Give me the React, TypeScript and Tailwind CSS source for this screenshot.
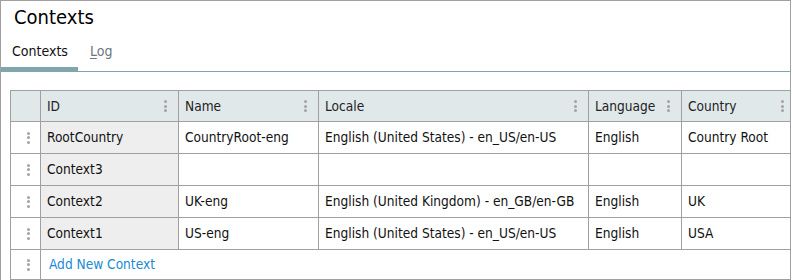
import React from "react";

type Row = {
  id: string;
  name: string;
  locale: string;
  language: string;
  country: string;
};

const ROWS: Row[] = [
  {
    id: "RootCountry",
    name: "CountryRoot-eng",
    locale: "English (United States) - en_US/en-US",
    language: "English",
    country: "Country Root",
  },
  { id: "Context3", name: "", locale: "", language: "", country: "" },
  {
    id: "Context2",
    name: "UK-eng",
    locale: "English (United Kingdom) - en_GB/en-GB",
    language: "English",
    country: "UK",
  },
  {
    id: "Context1",
    name: "US-eng",
    locale: "English (United States) - en_US/en-US",
    language: "English",
    country: "USA",
  },
];

const COLUMNS = ["ID", "Name", "Locale", "Language", "Country"];

function Kebab() {
  return (
    <div className="flex flex-col gap-[1.5px]">
      <span className="block h-[3px] w-[3px] rounded-full bg-[#a3a3a3]" />
      <span className="block h-[3px] w-[3px] rounded-full bg-[#a3a3a3]" />
      <span className="block h-[3px] w-[3px] rounded-full bg-[#a3a3a3]" />
    </div>
  );
}

function HandleCell({ last }: { last?: boolean }) {
  return (
    <div
      className={`flex items-center justify-center border-l border-b border-[#a0a0a0] pl-[5px] ${
        last ? "h-[30px]" : "h-[32px]"
      }`}
    >
      <Kebab />
    </div>
  );
}

function Cell({ children, grey }: { children?: React.ReactNode; grey?: boolean }) {
  return (
    <div
      className={`flex h-[32px] items-center overflow-hidden whitespace-nowrap border-l border-b border-[#a0a0a0] pl-[6px] text-[13.6px] text-[#111] ${
        grey ? "bg-[#eeeeee]" : "bg-white"
      }`}
    >
      {children}
    </div>
  );
}

export default function App() {
  return (
    <div className="h-[280px] w-[792px] overflow-hidden bg-white font-['DejaVu_Sans_Condensed','DejaVu_Sans',sans-serif]">
      <div className="h-[300px] w-[791px] border-l border-t border-r border-[#a0a0a0]">
        <h1 className="pl-[13px] pt-[4px] text-[20px] leading-[24px] text-black">Contexts</h1>

        <div className="mt-[13px] flex border-b border-[#7fa5ad]">
          <div className="w-[77px] border-b-[4px] border-[#7fa5ad] pl-[11px] pb-[7px] text-[14px] leading-[18px] text-[#111]">
            Contexts
          </div>
          <div className="mb-[1px] pl-[12px] pb-[7px] text-[14px] leading-[18px] text-[#6c7680]">
            <span className="underline underline-offset-2">L</span>og
          </div>
        </div>

        <div className="ml-[9px] mt-[18px] grid grid-cols-[30px_138px_140px_270px_93px_109px] border-t border-[#a0a0a0]">
          <div className="h-[31px] border-l border-b border-[#a0a0a0] bg-[#e1e8ea]" />
          {COLUMNS.map((col, i) => (
            <div
              key={col}
              className={`flex h-[31px] items-center justify-between border-l border-b border-[#a0a0a0] bg-[#e1e8ea] pl-[6px] text-[13.6px] text-[#222] ${
                i === COLUMNS.length - 1 ? "pr-[6px]" : "pr-[11px]"
              }`}
            >
              <span>{col}</span>
              <Kebab />
            </div>
          ))}

          {ROWS.map((row) => (
            <React.Fragment key={row.id}>
              <HandleCell />
              <Cell grey>{row.id}</Cell>
              <Cell>{row.name}</Cell>
              <Cell>{row.locale}</Cell>
              <Cell>{row.language}</Cell>
              <Cell>{row.country}</Cell>
            </React.Fragment>
          ))}

          <HandleCell last />
          <div className="col-span-5 flex h-[30px] items-center border-l border-b border-[#a0a0a0] pl-[8px] text-[13.6px] text-[#1a8ad6]">
            Add New Context
          </div>
        </div>
      </div>
    </div>
  );
}
